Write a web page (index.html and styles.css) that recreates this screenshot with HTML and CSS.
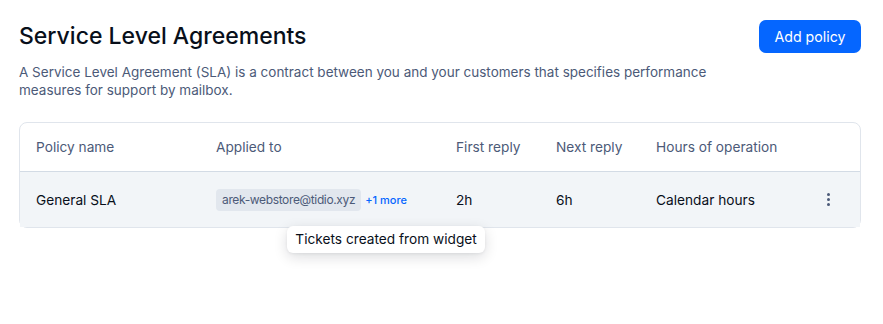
FILE: index.html
```html
<!DOCTYPE html>
<html lang="en">
<head>
<meta charset="utf-8">
<title>Service Level Agreements</title>
<link rel="stylesheet" href="styles.css">
</head>
<body>
<main class="page">
  <header class="page-header">
    <h1 class="title">Service Level Agreements</h1>
    <button class="btn-primary" type="button">Add policy</button>
  </header>
  <p class="desc">A Service Level Agreement (SLA) is a contract between you and your customers that specifies performance measures for support by mailbox.</p>

  <section class="table">
    <div class="row row-head">
      <div class="cell">Policy name</div>
      <div class="cell">Applied to</div>
      <div class="cell">First reply</div>
      <div class="cell">Next reply</div>
      <div class="cell">Hours of operation</div>
      <div class="cell"></div>
    </div>
    <div class="row row-body">
      <div class="cell">General SLA</div>
      <div class="cell applied">
        <span class="chip">arek-webstore@tidio.xyz</span>
        <span class="more">+1 more<span class="tooltip">Tickets created from widget</span></span>
      </div>
      <div class="cell">2h</div>
      <div class="cell">6h</div>
      <div class="cell">Calendar hours</div>
      <div class="cell kebab-cell">
        <span class="kebab"><i></i><i></i><i></i></span>
      </div>
    </div>
  </section>
</main>
</body>
</html>
```

FILE: styles.css
```css
* { box-sizing: border-box; }
html, body { margin: 0; padding: 0; background: #fff; }
body {
  font-family: "Inter", "Lato", "Noto Sans", sans-serif;
  color: #080f1a;
  -webkit-font-smoothing: antialiased;
}
.page {
  min-height: 324px;
  padding: 20px 22px 0 19px;
}
.page-header {
  display: flex;
  justify-content: space-between;
  align-items: flex-start;
}
.title {
  margin: 0;
  font-size: 23px;
  line-height: 33px;
  font-weight: 500;
  color: #080f1a;
}
.btn-primary {
  height: 33px;
  padding: 0 15.5px;
  border: 0;
  border-radius: 7px;
  background: #0566ff;
  color: #fff;
  font: inherit;
  font-size: 14.2px;
  font-weight: 400;
  cursor: pointer;
}
.desc {
  margin: 10px 0 0;
  max-width: 700px;
  font-size: 13.5px;
  line-height: 18px;
  color: #4c5a78;
}
.table {
  margin-top: 23px;
  border: 1px solid #e0e5ec;
  border-radius: 8px;
}
.row {
  display: grid;
  grid-template-columns: 180px 240px 100px 100px 1fr 32px;
  align-items: center;
  padding: 0 16px;
  font-size: 13.7px;
}
.row-head {
  height: 49px;
  color: #4c5a78;
  border-bottom: 1px solid #d3dbe5;
}
.row-body {
  height: 55px;
  background: #f2f5f8;
  color: #080f1a;
}
.applied {
  display: flex;
  align-items: center;
  gap: 4px;
}
.chip {
  height: 22px;
  line-height: 22px;
  padding: 0 6px;
  border-radius: 4px;
  background: #e2e7ee;
  color: #4c5a78;
  font-size: 12px;
  letter-spacing: -0.36px;
}
.more {
  position: relative;
  display: inline-flex;
  justify-content: center;
  color: #0566ff;
  font-size: 11px;
  font-weight: 500;
}
.tooltip {
  position: absolute;
  top: calc(100% + 19px);
  z-index: 10;
  display: block;
  white-space: nowrap;
  height: 27px;
  line-height: 27px;
  padding: 0 8px;
  background: #fff;
  border-radius: 6px;
  box-shadow: 0 4px 14px rgba(8, 15, 26, 0.14), 0 1px 3px rgba(8, 15, 26, 0.06);
  color: #080f1a;
  font-size: 13.7px;
  font-weight: 400;
}
.kebab-cell {
  display: flex;
  justify-content: center;
}
.kebab {
  display: flex;
  flex-direction: column;
  gap: 2px;
}
.kebab i {
  display: block;
  width: 3px;
  height: 3px;
  border-radius: 50%;
  background: #4c5a78;
}
```
